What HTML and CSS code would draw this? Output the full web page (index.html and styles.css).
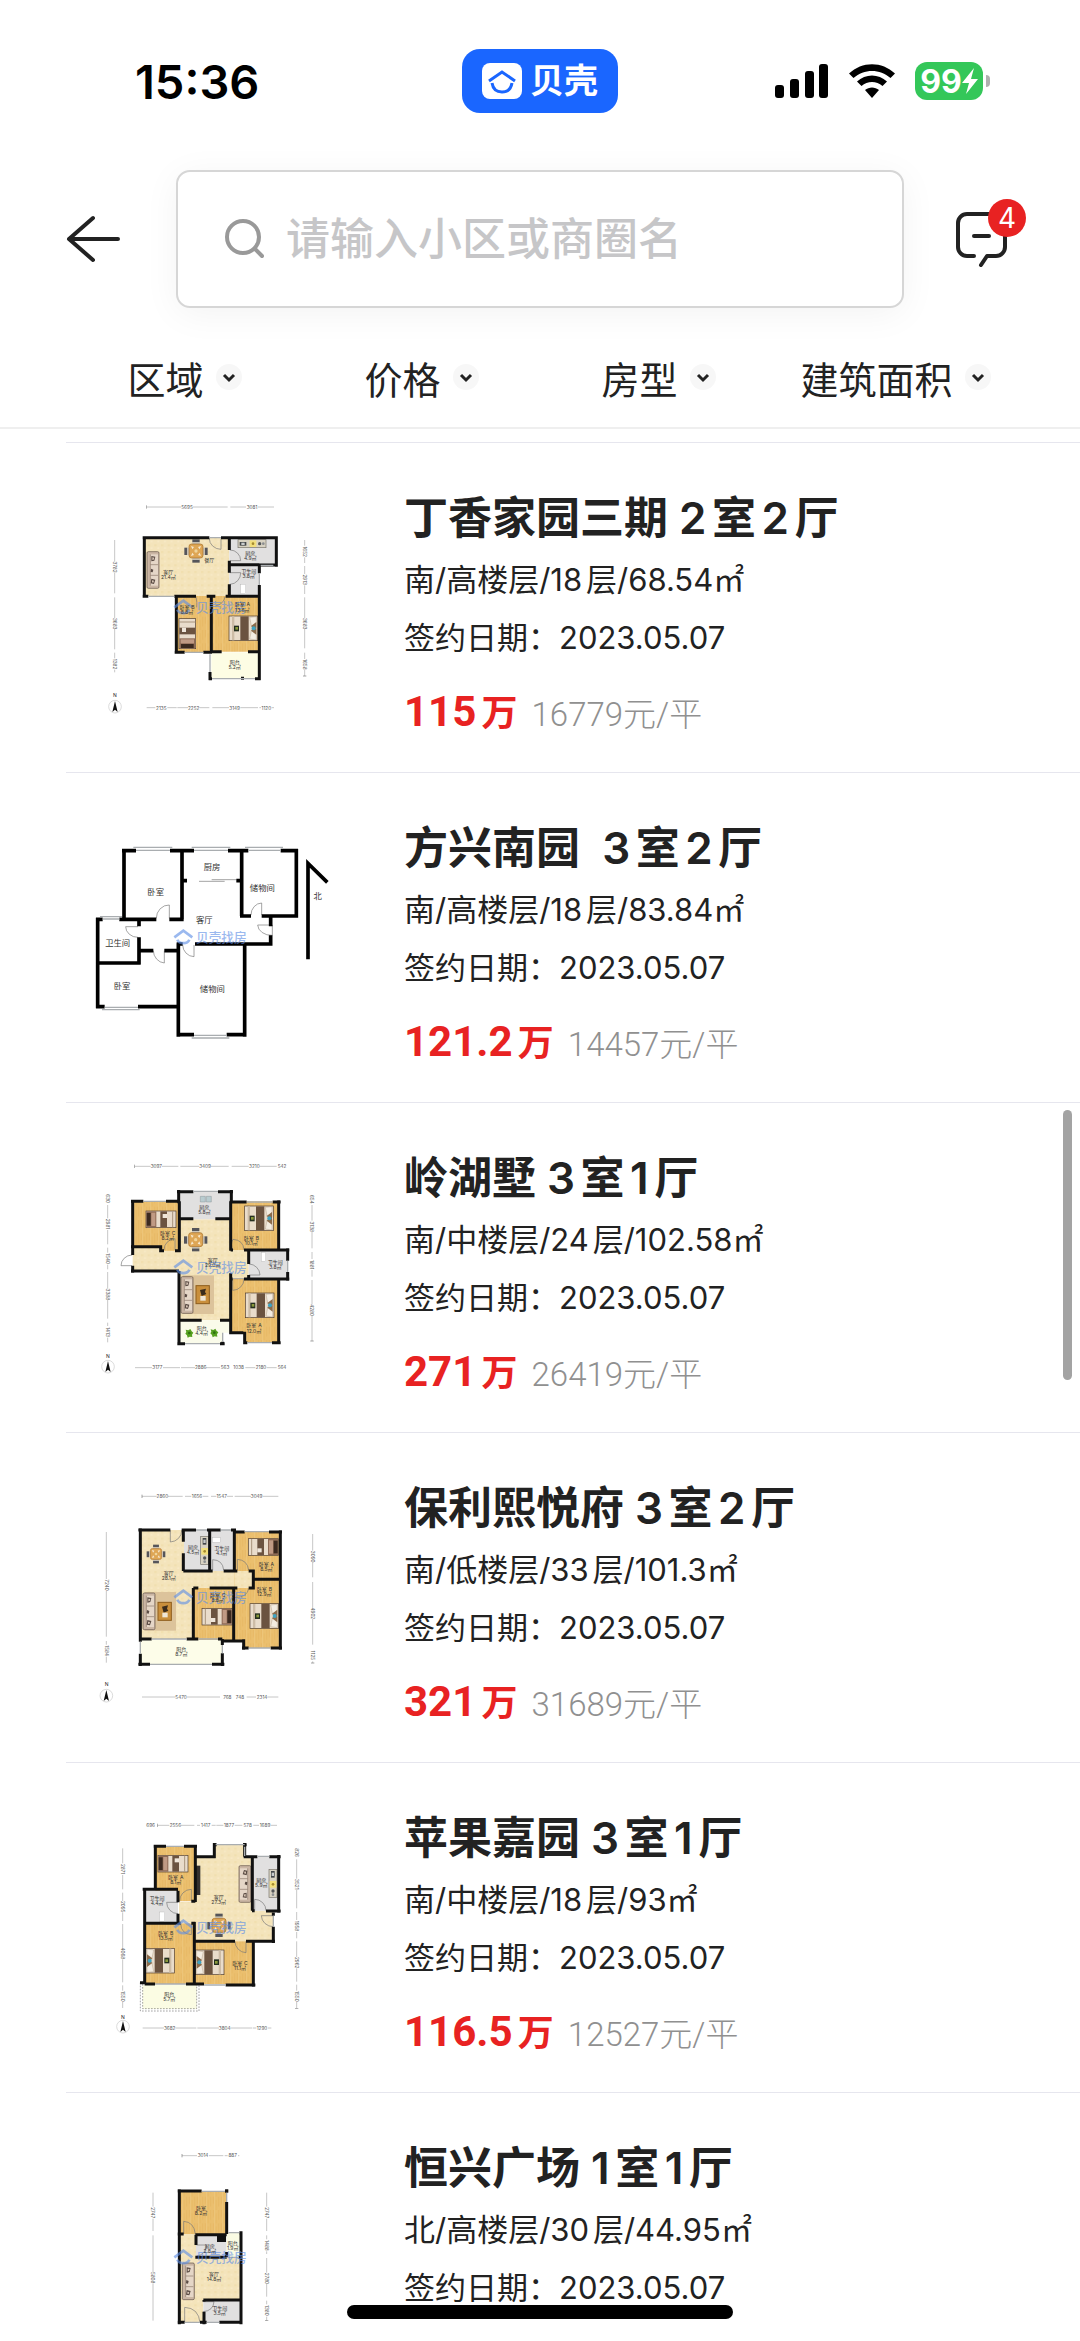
FILE: index.html
```html
<!DOCTYPE html>
<html lang="zh-CN">

<head>
    <meta charset="UTF-8">
    <meta name="viewport" content="width=device-width, initial-scale=1">
    <title>成交房源</title>
    <link rel="stylesheet" href="styles.css">
</head>

<body>
    <!-- 户型图公用的图形 -->
    <svg class="defs" width="0" height="0" aria-hidden="true">
        <defs>
            <pattern id="wood" width="24" height="40" patternUnits="userSpaceOnUse">
                <rect width="24" height="40" fill="#ebbf6e" />
                <path d="M4 0V22M12 10V40M20 0V30" stroke="#e6b662" stroke-width="2" />
                <path d="M8 0V40" stroke="#f0c980" stroke-width="2" />
            </pattern>
            <pattern id="tile" width="20" height="20" patternUnits="userSpaceOnUse">
                <rect width="20" height="20" fill="#f4e4bb" />
                <rect x="3" y="3" width="7" height="6" fill="#f1dfaf" />
                <rect x="12" y="12" width="6" height="5" fill="#f8eac7" />
            </pattern>
            <g id="bed">
                <rect x="0" y="0" width="86" height="74" fill="#e9dccb" stroke="#4b3a2c" stroke-width="2" />
                <rect x="9" y="1" width="7" height="72" fill="#cdbca6" />
                <rect x="34" y="1" width="25" height="72" fill="#6b5340" />
                <rect x="15" y="29" width="15" height="17" fill="#252f20" />
                <rect x="19" y="33" width="8" height="8" fill="#8a9a3c" />
                <path d="M62 4l20-2v32l-14 0zM68 40h14v32l-20-3z" fill="#f3ece1" stroke="#9b856c" />
                <path d="M66 30l16-12v38l-16-12 8-7z" fill="#8b6b4b" />
                <circle cx="74" cy="37" r="6" fill="#3fa3c2" />
            </g>
            <g id="cot">
                <rect x="0" y="0" width="90" height="50" fill="#e9dccb" stroke="#4b3a2c" stroke-width="2" />
                <rect x="1" y="1" width="30" height="48" fill="#8d6a55" />
                <rect x="2" y="6" width="12" height="38" fill="#3c2a20" />
                <rect x="16" y="5" width="12" height="40" fill="#c09a84" />
                <rect x="43" y="1" width="20" height="48" fill="#6b5340" />
                <rect x="50" y="9" width="13" height="12" fill="#efe6da" />
                <path d="M80 1v48" stroke="#a8947c" stroke-width="3" />
            </g>
            <g id="sofa">
                <rect x="1" y="1" width="36" height="110" rx="4" fill="#cbb6a4" stroke="#5f5047" stroke-width="2" />
                <rect x="11" y="9" width="23" height="94" fill="#e5d6c7" />
                <path d="M11 40h23M11 72h23M11 9v94" stroke="#8c786a" stroke-width="2" />
                <path d="M14 14l12 2-3 12-9 2zM13 52l7 3-2 8-6-1zM14 82l12 3-4 13-10-2z" fill="#5a4b44" />
                <path d="M17 18l6 1-2 6-4 1zM16 87l6 1-2 6-4-1z" fill="#d6c4b4" />
            </g>
            <g id="dining">
                <rect x="24" y="0" width="22" height="9" fill="#55555a" />
                <rect x="24" y="61" width="22" height="9" fill="#55555a" />
                <rect x="0" y="25" width="9" height="22" fill="#55555a" />
                <rect x="61" y="25" width="9" height="22" fill="#55555a" />
                <path d="M24 9h22v6H24zM24 55h22v6H24zM9 25h6v22H9zM55 25h6v22h-6z" fill="#c9c5bd" />
                <rect x="14" y="14" width="42" height="42" rx="8" fill="#dea655" stroke="#a56c25" stroke-width="2" />
                <path d="M20 20l9 3-5 7zM50 20l-9 3 5 7zM20 50l9-3-5-7zM50 50l-9-3 5-7z" fill="#f7ead2" />
                <circle cx="35" cy="35" r="5" fill="#f0d49a" />
            </g>
            <g id="coffee">
                <rect x="0" y="0" width="94" height="116" fill="#dcc39b" />
                <rect x="40" y="31" width="40" height="54" fill="#c98f3c" stroke="#8e5d1c" stroke-width="3" />
                <path d="M52 44l18-4-3 10 4 6-14 6z" fill="#3b2c1c" />
                <rect x="53" y="62" width="16" height="14" fill="#efe6d6" />
            </g>
            <g id="plant">
                <path d="M0 2l8 2 6-4 4 7 5 4-4 6 1 7-8-1-6 3-2-7-5-5 3-5z" fill="#55a01f" />
                <circle cx="11" cy="12" r="4" fill="#2f7010" />
            </g>
            <g id="stove">
                <rect x="0" y="0" width="84" height="24" fill="#d8d2c2" stroke="#77736a" stroke-width="2" />
                <rect x="5" y="7" width="20" height="11" fill="#44474a" />
                <rect x="10" y="9" width="10" height="7" fill="#c9cccd" />
                <rect x="35" y="2" width="20" height="20" fill="#f2df7c" />
                <circle cx="45" cy="12" r="4" fill="#a58b30" />
                <circle cx="65" cy="12" r="5" fill="#55585a" />
                <circle cx="76" cy="12" r="4" fill="#8b8e90" />
            </g>
            <g id="compass">
                <circle cx="20" cy="20" r="19" fill="#fff" stroke="#c9c9c9" stroke-width="2" />
                <path d="M20 3l8 33-8-7-8 7z" fill="#111" />
            </g>
            <g id="mark" fill="none" stroke="#5f8fe6" opacity=".62">
                <path d="M343 382l27-20 27 20" stroke-width="8" />
                <path d="M352 389a19 15 0 0 0 36 0" stroke-width="8" />
                <text class="mark-text" x="408" y="397">贝壳找房</text>
            </g>
            <marker id="tick" viewBox="0 0 4 12" refX="2" refY="6" markerWidth="4" markerHeight="12"
                markerUnits="userSpaceOnUse" orient="auto">
                <path d="M2 1V11" stroke="#777" stroke-width="2" />
            </marker>
        </defs>
    </svg>

    <div class="app">
        <div class="status">
            <span class="time">15:36</span>
            <span class="island">
                <svg width="40" height="36" viewBox="0 0 40 36" aria-hidden="true">
                    <rect width="40" height="36" rx="8" fill="#fff" />
                    <path d="M7 18l13-9 13 9" fill="none" stroke="#1a66ff" stroke-width="3" />
                    <path d="M10 20c1 6 5 9 10 9s9-3 10-9" fill="none" stroke="#1a66ff" stroke-width="3" />
                </svg>
                贝壳
            </span>
            <div class="signals">
                <svg width="54" height="34" viewBox="0 0 54 34" aria-hidden="true">
                    <rect x="0" y="21" width="9" height="13" rx="3" />
                    <rect x="15" y="15" width="9" height="19" rx="3" />
                    <rect x="30" y="7" width="9" height="27" rx="3" />
                    <rect x="44" y="0" width="9" height="34" rx="3" />
                </svg>
                <svg width="46" height="34" viewBox="0 0 46 34" aria-hidden="true">
                    <path d="M0 9.500C13-3 33-3 46 9.500L41.500 14C31 4.500 15 4.500 4.500 14z" />
                    <path d="M8 17.500c8.500-8 21.500-8 30 0L33.500 22c-6-5.500-15-5.500-21 0z" />
                    <path d="M16 26c4-3.500 10-3.500 14 0l-7 8z" />
                </svg>
                <span class="battery">
                    <span class="level">99<svg width="16" height="26" viewBox="0 0 16 26" aria-hidden="true">
                            <path d="M12 0L0 15h7L4 26 16 11H9z" fill="#fff" />
                        </svg></span>
                    <i class="nub"></i>
                </span>
            </div>
        </div>

        <header class="header">
            <button class="icon_btn" type="button" aria-label="返回">
                <svg width="54" height="50" viewBox="0 0 54 50" fill="none" stroke="#222" stroke-width="4"
                    stroke-linecap="round" stroke-linejoin="round">
                    <path d="M3 25H52M27 4L3 25l24 21" />
                </svg>
            </button>
            <label class="search">
                <svg width="40" height="40" viewBox="0 0 40 40" fill="none" stroke="#999" stroke-width="4"
                    stroke-linecap="round" aria-hidden="true">
                    <circle cx="19" cy="18" r="16" />
                    <path d="M31 30l7 7" />
                </svg>
                <input type="text" placeholder="请输入小区或商圈名" aria-label="搜索">
            </label>
            <button class="icon_btn msg" type="button" aria-label="消息">
                <svg width="54" height="56" viewBox="0 0 54 56" fill="none" stroke="#222" stroke-width="4"
                    stroke-linecap="round" stroke-linejoin="round">
                    <path d="M19 45H12a9 9 0 0 1-9-9V12a9 9 0 0 1 9-9H41a9 9 0 0 1 9 9V36a9 9 0 0 1-9 9H32l-6 9" />
                    <path d="M19 25H34" />
                </svg>
                <span class="badge">4</span>
            </button>
        </header>

        <nav class="filters">
            <button type="button">区域<svg class="arrow" viewBox="0 0 26 26"><path d="M8 11l5 5 5-5" /></svg></button>
            <button type="button">价格<svg class="arrow" viewBox="0 0 26 26"><path d="M8 11l5 5 5-5" /></svg></button>
            <button type="button">房型<svg class="arrow" viewBox="0 0 26 26"><path d="M8 11l5 5 5-5" /></svg></button>
            <button type="button">建筑面积<svg class="arrow" viewBox="0 0 26 26"><path d="M8 11l5 5 5-5" /></svg></button>
        </nav>

        <main class="list">
            <a class="item" href="#">
                <svg class="plan" viewBox="18 30 882 810">
                    <rect x="252" y="203" width="256" height="175" fill="url(#tile)" />
                    <path d="M508 203H648V285H598V376H508z" fill="#e1e0e0" />
                    <path d="M350 378H598V545H454V547H350z" fill="url(#wood)" />
                    <rect x="454" y="547" width="144" height="78" fill="#fdfde4" />
                    <use href="#sofa" x="260" y="244" />
                    <use href="#dining" x="373" y="208" />
                    <use href="#stove" x="534" y="209" />
                    <use href="#cot" transform="translate(357 536) rotate(-90)" />
                    <use href="#bed" x="507" y="438" />
                    <rect x="542" y="343" width="15" height="28" fill="#fff" stroke="#aaa" />
                    <g class="thin">
                        <path d="M448 203V206A36 32 0 0 0 483 238V206M510 240A32 32 0 0 1 542 272H510M510 343A34 34 0 0 0 542 308H510M408 380Q412 400 410 412M495 380Q492 402 466 408" />
                    </g>
                    <g class="wall">
                        <path d="M248 203H448M483 203H653M253 199V383M248 379H265M343 379H408M440 379H466M497 379H602M649 199V290M653 285H598M508 206V240M508 272V308M508 343V378M508 284H598M598 285V310M598 345V630M349 378V551M344 547H374M430 547H456M454 378V545M454 545H485M564 545H602M450 606V630M446 626H456M543 625H552M585 626H602" />
                    </g>
                    <g class="glass">
                        <path d="M448 203H483M265 379H343M598 310V345M374 547H430M450 553V606M456 626H585M602 286H640" />
                    </g>
                    <use href="#mark" y="30" />
                    <g class="room">
                        <text x="325" y="312">客厅<tspan x="325" dy="16">21.4㎡</tspan></text>
                        <text x="448" y="277">餐厅</text>
                        <text x="571" y="254">厨房<tspan x="571" dy="16">4.9㎡</tspan></text>
                        <text x="566" y="309">卫生间<tspan x="566" dy="16">3.8㎡</tspan></text>
                        <text x="381" y="417">卧室B<tspan x="381" dy="14">8.8㎡</tspan></text>
                        <text x="547" y="409">卧室A<tspan x="547" dy="16">13.6㎡</tspan></text>
                        <text x="524" y="582">阳台<tspan x="524" dy="15">5.2㎡</tspan></text>
                    </g>
                    <g class="size">
                        <path d="M260 111H363M398 111H503M511 111H558M594 111H642M260 713H286M322 713H350M352 713H384M418 713H448M457 713H507M541 713H594M598 713H603M635 713H642M164 210V275M164 307V370M164 382V445M164 477V538M164 548V565M164 599V607M734 210V227M734 262V279M734 288V312M734 346V372M734 382V445M734 477V535M734 548V567M734 600V618" />
                        <text x="381" y="116">5695</text>
                        <text x="576" y="116">3081</text>
                        <text x="304" y="719">2135</text>
                        <text x="401" y="719">2252</text>
                        <text x="524" y="719">3149</text>
                        <text x="619" y="719">1120</text>
                        <text transform="translate(159 291) rotate(90)">3782</text>
                        <text transform="translate(159 461) rotate(90)">3683</text>
                        <text transform="translate(159 582) rotate(90)">1382</text>
                        <text transform="translate(729 245) rotate(90)">1652</text>
                        <text transform="translate(729 329) rotate(90)">2913</text>
                        <text transform="translate(729 461) rotate(90)">3683</text>
                        <text transform="translate(729 583) rotate(90)">1658</text>
                    </g>
                    <text class="north" x="165" y="682">N</text>
                    <use href="#compass" x="145" y="690" />
                </svg>
                <div class="info">
                    <h2>丁香家园三期 2室2厅</h2>
                    <p>南/高楼层/18层/68.54㎡</p>
                    <p>签约日期：2023.05.07</p>
                    <div class="price"><strong>115<em>万</em></strong><span>16779元/平</span></div>
                </div>
            </a>

            <a class="item" href="#">
                <svg class="plan" viewBox="18 0 882 810">
                    <g class="thin">
                        <path d="M289 325A38 40 0 0 1 328 285V325M573 315A33 36 0 0 1 605 279V315M234 382A37 32 0 0 1 197 350H234M637 376A42 32 0 0 1 593 345H637V376M280 422A36 38 0 0 0 313 459V422M368 405A35 36 0 0 0 402 440V405" />
                        <path d="M417 214H494M455 209H529" />
                    </g>
                    <g class="wall solid">
                        <path d="M186 122H228M330 122H402M504 122H565M662 122H714M192 117V328M366 122V328M545 122V318M709 117V323M366 212H381M529 212H545M540 318H573M605 318H714M108 328H128M178 328H289M328 328H371M632 320V349M632 376V407M637 402H405M368 402H350M113 323V595M237 328V349M237 382V463M113 459H242M237 422H280M313 422H354M108 590H134M234 590H354M355 400V680M350 674H402M500 674H559M554 402V680" />
                        <path d="M744 448V160L802 217" />
                    </g>
                    <g class="glass">
                        <path d="M228 121H330M402 121H504M565 121H662M128 327H178M134 592H234M402 676H500" />
                        <path d="M220 112H337M395 112H511M555 112H669M120 320H186M126 599H239M395 684H508" />
                    </g>
                    <use href="#mark" />
                    <g class="room big">
                        <text x="287" y="255">卧室</text>
                        <text x="456" y="180">厨房</text>
                        <text x="607" y="243">储物间</text>
                        <text x="433" y="340">客厅</text>
                        <text x="173" y="409">卫生间</text>
                        <text x="186" y="537">卧室</text>
                        <text x="457" y="545">储物间</text>
                        <text x="773" y="267">北</text>
                    </g>
                </svg>
                <div class="info">
                    <h2>方兴南园&nbsp; 3室2厅</h2>
                    <p>南/高楼层/18层/83.84㎡</p>
                    <p>签约日期：2023.05.07</p>
                    <div class="price"><strong>121.2<em>万</em></strong><span>14457元/平</span></div>
                </div>
            </a>

            <a class="item" href="#">
                <svg class="plan" viewBox="18 0 882 810">
                    <path d="M218 320H357V238H512V330H566V414H512V541H357V392H218z" fill="url(#tile)" />
                    <path d="M218 184H357V332H302V320H218zM512 184H656V330H512zM512 416H656V607H554V578H512z" fill="url(#wood)" />
                    <path d="M357 155H514V238H357zM566 333H683V416H566z" fill="#e1e0e0" />
                    <path d="M357 541H512V578H488V610H357z" fill="#fafbea" />
                    <use href="#coffee" x="368" y="406" />
                    <use href="#sofa" x="362" y="409" />
                    <use href="#dining" x="372" y="264" />
                    <use href="#cot" x="258" y="213" />
                    <use href="#bed" x="554" y="198" />
                    <use href="#bed" x="556" y="459" />
                    <use href="#plant" x="377" y="567" />
                    <use href="#plant" x="452" y="566" />
                    <path d="M421 169h15v17h-15zM439 169h15v17h-15z" fill="#b9ccd0" stroke="#6f7a7d" />
                    <rect x="604" y="337" width="13" height="27" fill="#fff" stroke="#aaa" />
                    <g class="thin">
                        <path d="M216 345A34 32 0 0 0 183 377H216M312 330A34 34 0 0 1 345 296V330M519 330A32 32 0 0 1 519 298Q550 300 552 330M567 372A34 34 0 0 1 600 405H567M518 451A34 34 0 0 0 552 416H518z" />
                    </g>
                    <g class="wall">
                        <path d="M213 184H250M318 184H352M351 155H400M474 155H519M356 150V190M514 150V184M509 186H560M638 186H662M656 181V330M218 179V345M213 320H302V332H312M345 332H358V184M358 236H400M466 236H512M512 184V332M512 330H519M552 330H688M566 330V372M566 405V416M683 325V362M683 396V422M688 417H552M518 417H512M512 400V578H550M213 393H357M218 377V398M357 393V615M358 541H425M480 541H512M352 611H375M480 611H494M488 605V611M554 575V613M550 608H562M636 608H662M656 417V613" />
                    </g>
                    <g class="glass">
                        <path d="M250 184H318M400 154H474M560 186H638M683 362V396M375 611H480M562 608H636M488 578V605" />
                    </g>
                    <use href="#mark" />
                    <g class="room">
                        <text x="433" y="206">厨房<tspan x="433" dy="15">5.8㎡</tspan></text>
                        <text x="323" y="286">卧室C<tspan x="323" dy="14">8.2㎡</tspan></text>
                        <text x="574" y="300">卧室B<tspan x="574" dy="15">10.1㎡</tspan></text>
                        <text x="458" y="367">客厅<tspan x="458" dy="15">29.0㎡</tspan></text>
                        <text x="646" y="372">卫生间<tspan x="646" dy="15">3.8㎡</tspan></text>
                        <text x="582" y="562">卧室A<tspan x="582" dy="16">12.0㎡</tspan></text>
                        <text x="425" y="571">阳台<tspan x="425" dy="15">4.4㎡</tspan></text>
                    </g>
                    <g class="size">
                        <path d="M224 79H272M306 79H355M361 79H418M452 79H506M515 79H566M599 79H650M225 683H276M309 683H360M363 683H405M438 683H480M556 683H586M620 683H650M143 195V235M143 270V313M143 323V338M143 374V388M143 396V446M143 480V536M143 548V558M143 593V607M756 195V242M756 276V325M756 336V357M756 390V410M756 420V493M756 527V603" />
                        <text x="289" y="84">3097</text>
                        <text x="435" y="84">3409</text>
                        <text x="583" y="84">3210</text>
                        <text x="666" y="84">542</text>
                        <text x="292" y="688">3177</text>
                        <text x="422" y="688">2886</text>
                        <text x="495" y="688">563</text>
                        <text x="536" y="688">1038</text>
                        <text x="603" y="688">2180</text>
                        <text x="666" y="688">564</text>
                        <text transform="translate(138 176) rotate(90)">630</text>
                        <text transform="translate(138 252) rotate(90)">2981</text>
                        <text transform="translate(138 356) rotate(90)">1540</text>
                        <text transform="translate(138 463) rotate(90)">3388</text>
                        <text transform="translate(138 576) rotate(90)">1413</text>
                        <text transform="translate(751 178) rotate(90)">654</text>
                        <text transform="translate(751 260) rotate(90)">3138</text>
                        <text transform="translate(751 374) rotate(90)">1881</text>
                        <text transform="translate(751 510) rotate(90)">4280</text>
                    </g>
                    <text class="north" x="144" y="655">N</text>
                    <use href="#compass" x="124" y="660" />
                </svg>
                <div class="info">
                    <h2>岭湖墅 3室1厅</h2>
                    <p>南/中楼层/24层/102.58㎡</p>
                    <p>签约日期：2023.05.07</p>
                    <div class="price"><strong>271<em>万</em></strong><span>26419元/平</span></div>
                </div>
            </a>

            <a class="item" href="#">
                <svg class="plan" viewBox="18 0 882 810">
                    <path d="M241 180H372V303H580V354H400V507H241z" fill="url(#tile)" />
                    <path d="M372 180H523V303H372z" fill="#e1e0e0" />
                    <path d="M523 186H661V534H551V510H400V354H523z" fill="url(#wood)" />
                    <path d="M523 303H580V354H523z" fill="url(#tile)" />
                    <rect x="241" y="510" width="246" height="73" fill="#fdfde9" />
                    <use href="#coffee" x="254" y="366" />
                    <use href="#sofa" x="248" y="368" />
                    <use href="#dining" transform="translate(260 224) scale(.8)" />
                    <use href="#stove" transform="translate(446 199) rotate(90)" />
                    <use href="#cot" transform="translate(655 256) rotate(180)" />
                    <use href="#cot" transform="translate(516 465) rotate(180)" />
                    <use href="#bed" x="570" y="401" />
                    <rect x="457" y="203" width="24" height="14" fill="#fff" stroke="#aaa" />
                    <g class="thin">
                        <path d="M331 181V216A36 34 0 0 0 365 181M458 300V269Q488 270 491 300M532 300V268Q562 270 566 300M523 383Q562 382 566 356" />
                    </g>
                    <g class="wall">
                        <path d="M235 180H331M365 180H408M441 180H482M513 180H528M241 175V515M241 551V588M235 583H270M456 583H493M487 550V588M487 507V525M484 513H555M551 508V539M546 534H566M632 534H666M661 181V539M523 186H554M627 186H666M523 180V300M449 184V303M370 184V215M370 250V303M370 303H458M491 303H532M566 303H580V354H566M580 328H661M400 354H415M449 354H532M400 354V507M521 356V510M241 507H275M380 507H415M474 507H487" />
                    </g>
                    <g class="glass">
                        <path d="M408 180H441M482 180H513M554 185H627M241 515V551M487 525V550M270 583H456M566 534H632M275 507H380M415 507H474" />
                    </g>
                    <use href="#mark" />
                    <g class="room">
                        <text x="399" y="238">厨房<tspan x="399" dy="15">4.5㎡</tspan></text>
                        <text x="485" y="241">卫生间<tspan x="485" dy="15">4.1㎡</tspan></text>
                        <text x="619" y="289">卧室A<tspan x="619" dy="15">8.5㎡</tspan></text>
                        <text x="326" y="315">客厅<tspan x="326" dy="15">28.1㎡</tspan></text>
                        <text x="613" y="364">卧室B<tspan x="613" dy="15">12.9㎡</tspan></text>
                        <text x="473" y="380">卧室C<tspan x="473" dy="15">8.8㎡</tspan></text>
                        <text x="364" y="542">阳台<tspan x="364" dy="15">8.7㎡</tspan></text>
                    </g>
                    <g class="size">
                        <path d="M246 79H290M324 79H368M375 79H394M428 79H445M453 79H469M501 79H519M524 79H573M608 79H655M246 681H346M381 681H480M560 681H588M622 681H655M139 186V327M139 363V500M139 513V524M139 560V578M758 192V242M758 277V322M758 336V413M758 447V524M758 574V579" />
                        <text x="307" y="84">2860</text>
                        <text x="411" y="84">1656</text>
                        <text x="485" y="84">1547</text>
                        <text x="590" y="84">3049</text>
                        <text x="363" y="686">5470</text>
                        <text x="502" y="686">768</text>
                        <text x="540" y="686">748</text>
                        <text x="606" y="686">2314</text>
                        <text transform="translate(134 345) rotate(90)">7240</text>
                        <text transform="translate(134 542) rotate(90)">1584</text>
                        <text transform="translate(753 260) rotate(90)">3090</text>
                        <text transform="translate(753 430) rotate(90)">4902</text>
                        <text transform="translate(753 556) rotate(90)">1125</text>
                    </g>
                    <text class="north" x="140" y="648">N</text>
                    <use href="#compass" x="119" y="657" />
                </svg>
                <div class="info">
                    <h2>保利熙悦府 3室2厅</h2>
                    <p>南/低楼层/33层/101.3㎡</p>
                    <p>签约日期：2023.05.07</p>
                    <div class="price"><strong>321<em>万</em></strong><span>31689元/平</span></div>
                </div>
            </a>

            <a class="item" href="#">
                <svg class="plan" viewBox="18 0 882 810">
                    <path d="M406 170H466V134H554V170H577V332H640V424H406V368H357V306H406z" fill="url(#tile)" />
                    <path d="M286 139H406V304H357V272H286zM254 370H406V552H254zM406 424H580V552H406z" fill="url(#wood)" />
                    <path d="M577 170H656V332H577zM254 272H354V368H254z" fill="#e1e0e0" />
                    <rect x="248" y="555" width="162" height="72" fill="#fbfce3" />
                    <use href="#cot" x="294" y="166" />
                    <use href="#dining" x="442" y="341" />
                    <use href="#sofa" transform="translate(574 308) rotate(180)" />
                    <use href="#stove" transform="translate(651 208) rotate(90)" />
                    <use href="#bed" transform="translate(343 519) rotate(180)" />
                    <use href="#bed" transform="translate(492 524) rotate(180)" />
                    <rect x="408" y="197" width="13" height="88" fill="#34302e" />
                    <rect x="299" y="336" width="15" height="28" fill="#fff" stroke="#aaa" />
                    <g class="thin">
                        <path d="M359 304A35 35 0 0 1 394 268V304M354 307H320A34 34 0 0 0 354 341M584 332V298A34 34 0 0 1 618 332M640 347H604A36 34 0 0 0 640 380M525 424A34 34 0 0 0 558 458V424M362 372Q364 402 394 404V372" />
                        <path d="M241 548V633H417V555M248 552V626H410V555" stroke-dasharray="5 4" />
                    </g>
                    <g class="wall">
                        <path d="M281 139H318M372 139H411M286 134V272M406 134V306M394 304H406M406 170H467M463 129V174M554 129V170M460 134H470M549 134H560M551 170H592M628 170H662M656 165V338M577 170V332M576 332H584M618 333H662M640 338V347M640 380V429M645 424H558M525 424H406M248 268H354M254 265V552M354 272V307M354 341V368M254 370H362M394 370H406M403 366V552M240 548H254M254 552H285M378 552H432M497 555H586M580 424V560" />
                    </g>
                    <g class="glass">
                        <path d="M318 139H372M467 134H554M592 169H628M554 140V168M285 552H378M432 555H497M640 347V380" />
                    </g>
                    <use href="#mark" />
                    <g class="room">
                        <text x="347" y="238">卧室A<tspan x="347" dy="15">8.1㎡</tspan></text>
                        <text x="604" y="247">厨房<tspan x="604" dy="15">5.9㎡</tspan></text>
                        <text x="291" y="299">卫生间<tspan x="291" dy="15">4.4㎡</tspan></text>
                        <text x="476" y="296">客厅<tspan x="476" dy="15">27.3㎡</tspan></text>
                        <text x="317" y="404">卧室B<tspan x="317" dy="15">13.5㎡</tspan></text>
                        <text x="540" y="494">卧室C<tspan x="540" dy="15">11.1㎡</tspan></text>
                        <text x="328" y="587">阳台<tspan x="328" dy="15">5.7㎡</tspan></text>
                    </g>
                    <g class="size">
                        <path d="M292 76H328M363 76H403M411 76H420M455 76H467M469 76H490M524 76H547M580 76H597M632 76H651M248 684H312M346 684H409M412 684H477M511 684H577M579 684H589M624 684H634M188 145V190M188 225V268M188 278V303M188 337V363M188 372V443M188 478V547M188 556V572M188 606V624M710 178V236M710 270V325M710 336V360M710 396V415M710 424V471M710 505V545M710 554V572M710 606V625" />
                        <text x="272" y="81">696</text>
                        <text x="346" y="81">2556</text>
                        <text x="437" y="81">1417</text>
                        <text x="507" y="81">1877</text>
                        <text x="563" y="81">578</text>
                        <text x="615" y="81">1689</text>
                        <text x="329" y="689">3682</text>
                        <text x="494" y="689">3804</text>
                        <text x="606" y="689">1290</text>
                        <text transform="translate(183 207) rotate(90)">2871</text>
                        <text transform="translate(183 320) rotate(90)">2095</text>
                        <text transform="translate(183 460) rotate(90)">4068</text>
                        <text transform="translate(183 589) rotate(90)">1550</text>
                        <text transform="translate(705 158) rotate(90)">826</text>
                        <text transform="translate(705 253) rotate(90)">3521</text>
                        <text transform="translate(705 378) rotate(90)">1958</text>
                        <text transform="translate(705 488) rotate(90)">2962</text>
                        <text transform="translate(705 589) rotate(90)">1550</text>
                    </g>
                    <text class="north" x="189" y="656">N</text>
                    <use href="#compass" x="169" y="660" />
                </svg>
                <div class="info">
                    <h2>苹果嘉园 3室1厅</h2>
                    <p>南/中楼层/18层/93㎡</p>
                    <p>签约日期：2023.05.07</p>
                    <div class="price"><strong>116.5<em>万</em></strong><span>12527元/平</span></div>
                </div>
            </a>

            <a class="item" href="#">
                <svg class="plan" viewBox="18 0 882 810">
                    <rect x="360" y="184" width="140" height="128" fill="url(#wood)" />
                    <path d="M360 312H408V382H542V508H430V577H360z" fill="url(#tile)" />
                    <path d="M408 314H500V382H408zM430 510H542V577H430z" fill="#e1e0e0" />
                    <rect x="500" y="309" width="42" height="73" fill="#fafbe3" />
                    <use href="#sofa" x="366" y="398" />
                    <rect x="471" y="314" width="27" height="22" fill="#111" />
                    <g class="thin">
                        <path d="M371 312V274Q402 276 406 312M374 578V532Q416 534 420 578M430 545Q460 542 462 515H430M410 345H440Q436 375 410 378" />
                    </g>
                    <g class="wall">
                        <path d="M353 183H425M495 183H505M500 178V188M500 216V312M358 178V583M353 312H371M406 314H500M538 309H547M543 304V583M408 314V345M406 382H500M500 366V382M536 382H543M430 510H543M432 510V515M432 545V583M353 577H374M420 577H440M478 577H547" />
                    </g>
                    <g class="glass">
                        <path d="M425 184H495M500 188V216M505 308H538M440 577H478M374 577H420M500 382H536" />
                    </g>
                    <use href="#mark" />
                    <g class="room">
                        <text x="423" y="239">卧室<tspan x="423" dy="15">8.2㎡</tspan></text>
                        <text x="518" y="345">阳台<tspan x="518" dy="14">1.9㎡</tspan></text>
                        <text x="449" y="353">厨房<tspan x="449" dy="15">2.8㎡</tspan></text>
                        <text x="462" y="439">客厅<tspan x="462" dy="15">14.8㎡</tspan></text>
                        <text x="479" y="539">卫生间<tspan x="479" dy="15">3.5㎡</tspan></text>
                    </g>
                    <g class="size">
                        <path d="M366 77H411M447 77H490M494 77H503M534 77H538M279 188V230M279 266V303M279 316V426M279 460V572M620 188V230M620 266V303M620 316V328M620 364V372M620 384V428M620 462V500M620 512V523M620 560V572" />
                        <text x="429" y="82">3014</text>
                        <text x="518" y="82">887</text>
                        <text transform="translate(274 248) rotate(90)">2747</text>
                        <text transform="translate(274 443) rotate(90)">5808</text>
                        <text transform="translate(615 248) rotate(90)">2747</text>
                        <text transform="translate(615 346) rotate(90)">1488</text>
                        <text transform="translate(615 445) rotate(90)">2780</text>
                        <text transform="translate(615 541) rotate(90)">1380</text>
                    </g>
                </svg>
                <div class="info">
                    <h2>恒兴广场 1室1厅</h2>
                    <p>北/高楼层/30层/44.95㎡</p>
                    <p>签约日期：2023.05.07</p>
                </div>
            </a>
        </main>
    </div>

    <i class="scroll_bar"></i>
    <i class="home_bar"></i>
</body>

</html>
```
FILE: styles.css
```css
* {
    box-sizing: border-box;
}

body {
    margin: 0;
    background: #fff;
    color: #222;
    font-family: Inter, "Noto Sans CJK SC", sans-serif;
    text-autospace: normal;
}

button {
    padding: 0;
    border: 0;
    background: none;
    color: inherit;
    font: inherit;
}

svg {
    display: block;
    flex: none;
}

.defs {
    position: absolute;
}

.app {
    display: flex;
    flex-direction: column;
    height: 100vh;
    overflow: hidden;
}

/* 状态栏 */
.status {
    display: grid;
    grid-template-columns: 1fr auto 1fr;
    align-items: center;
    flex: none;
    height: 162px;
    padding: 0 90px;
    color: #000;
}

.time {
    padding-left: 45px;
    font-size: 47px;
    font-weight: 600;
}

.island {
    display: flex;
    align-items: center;
    justify-content: center;
    gap: 8px;
    width: 156px;
    height: 64px;
    border-radius: 18px;
    background: #1a66ff;
    color: #fff;
    font-size: 34px;
    font-weight: 700;
    line-height: 40px;
}

.signals {
    display: flex;
    align-items: center;
    justify-self: end;
    gap: 20px;
}

.battery {
    display: flex;
    align-items: center;
    gap: 3px;
}

.level {
    display: flex;
    align-items: center;
    justify-content: center;
    width: 68px;
    height: 38px;
    border-radius: 12px;
    background: #34c759;
    color: #fff;
    font-size: 32px;
    font-weight: 700;
}

.nub {
    width: 4px;
    height: 12px;
    border-radius: 0 4px 4px 0;
    background: #b0b0b0;
}

/* 搜索 */
.header {
    display: flex;
    align-items: center;
    flex: none;
    padding: 8px 54px 0 66px;
}

.icon_btn {
    flex: none;
}

.msg {
    position: relative;
    width: 71px;
}

.badge {
    position: absolute;
    top: -12px;
    right: 0;
    width: 38px;
    height: 38px;
    border-radius: 50%;
    background: #e82222;
    color: #fff;
    font-size: 28px;
    line-height: 38px;
    text-align: center;
}

.search {
    display: flex;
    align-items: center;
    flex: 1;
    gap: 22px;
    min-width: 0;
    height: 138px;
    margin: 0 51px 0 56px;
    padding: 0 46px;
    border: 2px solid #d6d6d6;
    border-radius: 14px;
    background: #fff;
    box-shadow: 0 6px 36px rgba(0, 0, 0, .05);
}

.search input {
    flex: 1;
    width: 100%;
    min-width: 0;
    padding: 0;
    border: 0;
    outline: 0;
    background: none;
    color: #222;
    font: inherit;
    font-size: 44px;
    font-weight: 500;
}

.search input::placeholder {
    color: #c6c6c8;
}

/* 筛选 */
.filters {
    display: grid;
    grid-template-columns: repeat(4, 1fr);
    flex: none;
    height: 98px;
    margin-top: 23px;
    padding: 0 66px 4px;
    border-bottom: 2px solid #efefef;
}

.filters button {
    display: flex;
    align-items: center;
    justify-content: center;
    gap: 12px;
    font-size: 38px;
}

.arrow {
    width: 26px;
    height: 26px;
    border-radius: 50%;
    background: #f7f7f7;
    fill: none;
    stroke: #222;
    stroke-width: 3;
}

/* 列表 */
.list {
    flex: 1;
    min-height: 0;
    padding: 13px 0 0 66px;
    overflow: hidden;
}

.item {
    display: flex;
    gap: 44px;
    height: 330px;
    border-top: 1px solid #e6e6ee;
    color: inherit;
    text-decoration: none;
}

.plan {
    width: 294px;
    height: 270px;
    margin-top: 37px;
}

.info {
    flex: 1;
    padding-top: 46px;
}

.info h2 {
    margin: 0 0 4px;
    font-size: 44px;
    font-weight: 600;
    line-height: 58px;
}

.info p {
    margin: 0;
    font-size: 31px;
    line-height: 58px;
}

.price {
    display: flex;
    align-items: baseline;
    gap: 14px;
    margin-top: 16px;
    line-height: 58px;
}

.price strong {
    color: #e82222;
    font-family: Roboto, "Noto Sans CJK SC", sans-serif;
    font-size: 42px;
    font-weight: 700;
}

.price em {
    font-size: 36px;
    font-style: normal;
}

.price span {
    color: #909090;
    font-family: Roboto, "Noto Sans CJK SC", sans-serif;
    font-size: 33px;
    font-weight: 300;
    text-autospace: no-autospace;
}

/* 户型图 */
.wall {
    fill: none;
    stroke: #111;
    stroke-width: 9;
}

.solid {
    stroke: #000;
    stroke-width: 11;
}

.thin {
    fill: none;
    stroke: #777;
    stroke-width: 2;
}

.glass {
    fill: none;
    stroke: #a9adb0;
    stroke-width: 4;
}

.room {
    fill: #333;
    font-size: 15px;
    text-anchor: middle;
}

.big {
    font-family: "Noto Sans CJK SC", sans-serif;
    font-size: 25px;
}

.size path {
    fill: none;
    stroke: #aaa;
    stroke-width: 2;
    marker-start: url(#tick);
    marker-end: url(#tick);
}

.size text {
    fill: #555;
    font-size: 14px;
    text-anchor: middle;
}

.north {
    fill: #222;
    font-size: 15px;
    text-anchor: middle;
}

.mark-text {
    fill: #5f8fe6;
    stroke: none;
    font-size: 38px;
    font-weight: 500;
}

/* 浮层 */
.scroll_bar {
    position: fixed;
    top: 1110px;
    right: 8px;
    width: 9px;
    height: 270px;
    border-radius: 5px;
    background: #a3a3a3;
}

.home_bar {
    position: fixed;
    right: 0;
    bottom: 22px;
    left: 0;
    width: 386px;
    height: 14px;
    margin: 0 auto;
    border-radius: 7px;
    background: #000;
}
```
